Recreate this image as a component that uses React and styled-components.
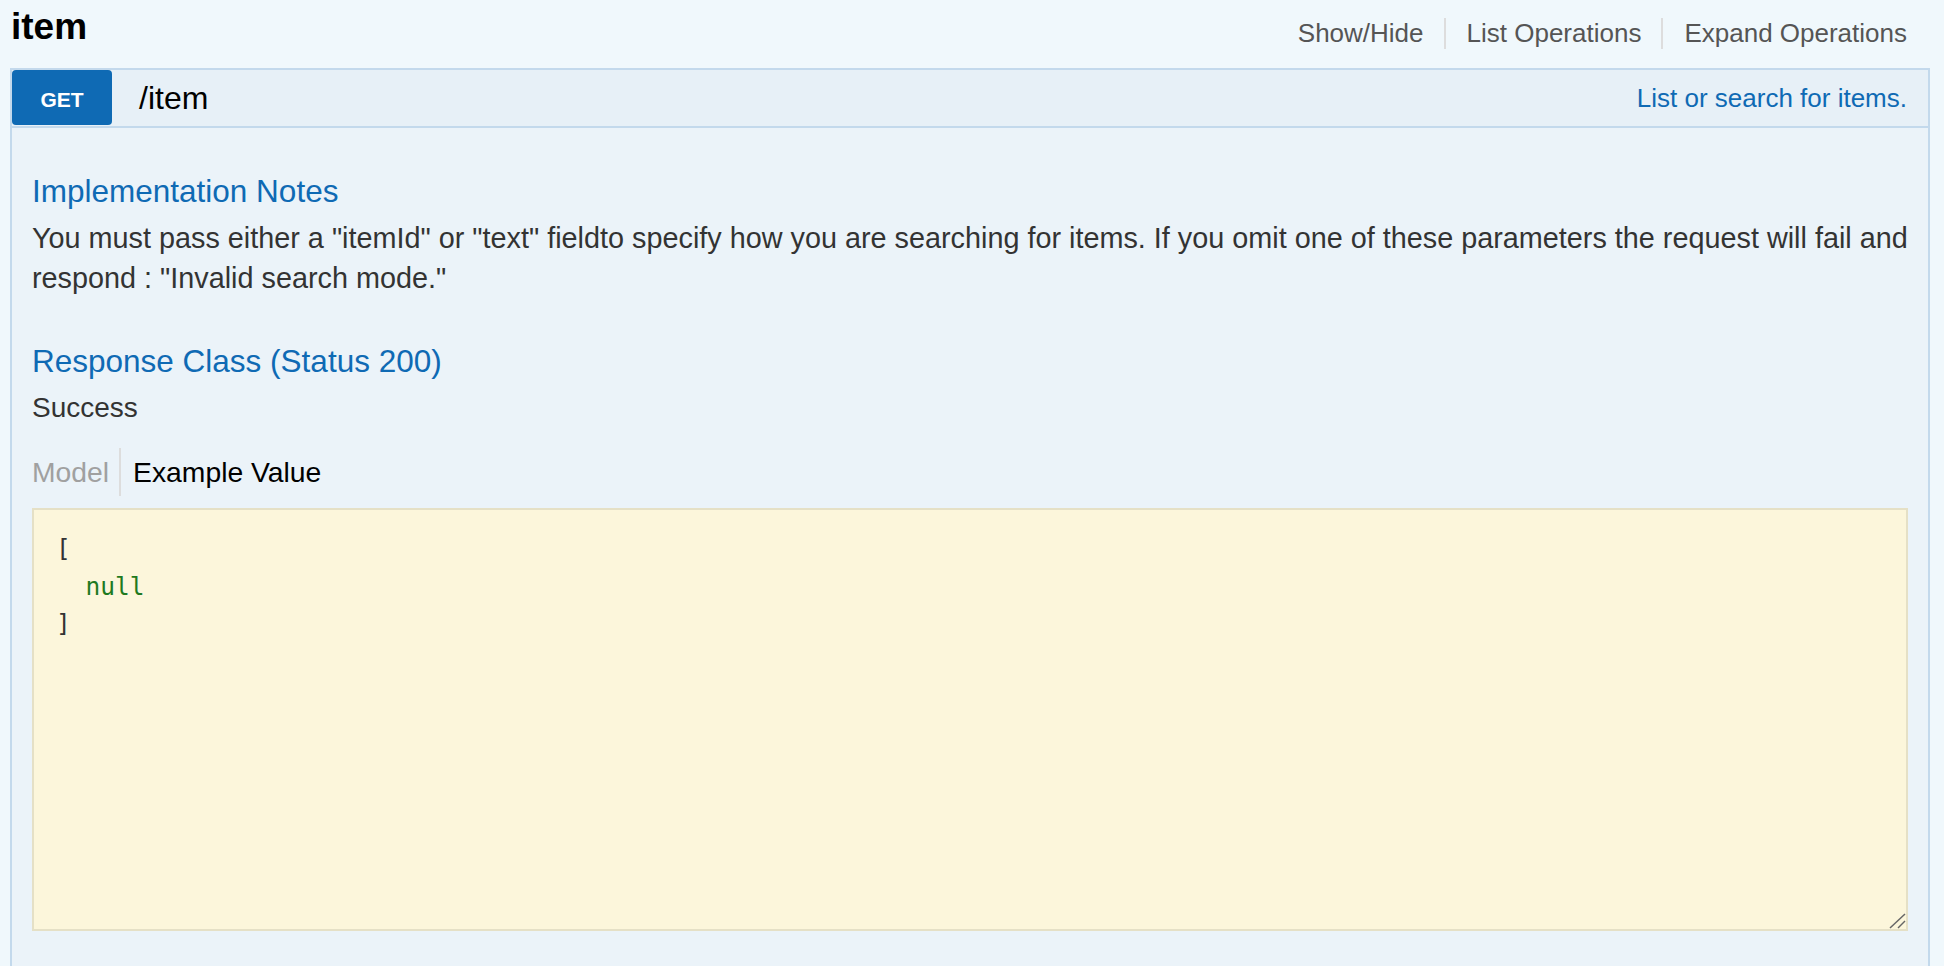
import React from 'react';
import styled, { createGlobalStyle } from 'styled-components';

const GlobalStyle = createGlobalStyle`
  html, body {
    margin: 0;
    padding: 0;
    height: 100%;
    overflow: hidden;
    background: #f0f8fc;
  }
  body {
    font-family: 'Liberation Sans', Arial, Helvetica, sans-serif;
    color: #333;
  }
`;

const Page = styled.div`
  padding: 0 14px 0 10px;
`;

const ResourceHeading = styled.div`
  display: flex;
  justify-content: space-between;
  align-items: flex-start;
  height: 68px;
`;

const Title = styled.h2`
  margin: 0;
  padding: 5px 0 0 1px;
  font-size: 37px;
  line-height: 44px;
  font-weight: bold;
  color: #000;
`;

const Options = styled.ul`
  list-style: none;
  display: flex;
  margin: 18px 3px 0 0;
  padding: 0;
`;

const Option = styled.li`
  padding: 0 20px 0 21px;
  font-size: 26px;
  line-height: 31px;
  color: #555;
  border-right: 2px solid #ddd;

  &:last-child {
    border-right: none;
  }
`;

const Operation = styled.div`
  border: 2px solid #c3d9ec;
`;

const OpHeading = styled.div`
  display: flex;
  align-items: center;
  height: 56px;
  padding-right: 21px;
  background: #e7f0f7;
  border-bottom: 2px solid #c3d9ec;
`;

const Method = styled.span`
  display: flex;
  align-items: center;
  justify-content: center;
  align-self: stretch;
  box-sizing: border-box;
  width: 100px;
  margin-bottom: 1px;
  padding-top: 4px;
  background: #0f6ab4;
  border-radius: 4px;
  color: #fff;
  font-size: 21px;
  font-weight: bold;
`;

const Path = styled.span`
  margin-left: 27px;
  font-size: 32px;
  color: #000;
`;

const Summary = styled.span`
  margin-left: auto;
  font-size: 26px;
  color: #0f6ab4;
`;

const OpContent = styled.div`
  padding: 45px 20px 40px;
  background: #ebf3f9;
`;

const SectionTitle = styled.h4`
  margin: 0 0 9px;
  font-size: 31.5px;
  line-height: 36px;
  font-weight: normal;
  color: #0f6ab4;
`;

const Text = styled.p`
  margin: 0 0 ${(p) => p.$gap || 0}px;
  font-size: ${(p) => p.$size || 28}px;
  line-height: 40px;
  color: #333;
`;

const Tabs = styled.ul`
  list-style: none;
  display: flex;
  margin: 20px 0 0;
  padding: 0;
`;

const Tab = styled.li`
  padding: 4px ${(p) => (p.$first ? '10px' : '0')} 4px ${(p) => (p.$first ? '0' : '12px')};
  font-size: 28.3px;
  line-height: 40px;
  color: ${(p) => (p.$active ? '#000' : '#a0a0a0')};
  border-right: ${(p) => (p.$first ? '2px solid #ddd' : 'none')};
`;

const Snippet = styled.pre`
  position: relative;
  box-sizing: border-box;
  height: 423px;
  margin: 12px 0 0;
  padding: 20px 22px;
  background: #fcf6db;
  border: 2px solid #e5e0c6;
  font-family: 'DejaVu Sans Mono', 'Liberation Mono', monospace;
  font-size: 24.5px;
  line-height: 37.5px;
  color: #333;
`;

const NullValue = styled.span`
  color: #1f7a1f;
`;

const Grip = styled.svg`
  position: absolute;
  right: 0;
  bottom: 0;
`;

const App = () => {
  return (
    <>
      <GlobalStyle />
      <Page>
        <ResourceHeading>
          <Title>item</Title>
          <Options>
            <Option>Show/Hide</Option>
            <Option>List Operations</Option>
            <Option>Expand Operations</Option>
          </Options>
        </ResourceHeading>
        <Operation>
          <OpHeading>
            <Method>GET</Method>
            <Path>/item</Path>
            <Summary>List or search for items.</Summary>
          </OpHeading>
          <OpContent>
            <SectionTitle>Implementation Notes</SectionTitle>
            <Text $gap={45} $size={28.8}>
              You must pass either a "itemId" or "text" fieldto specify how you are searching for items. If you omit one of these parameters the request will fail and respond : "Invalid search mode."
            </Text>
            <SectionTitle>Response Class (Status 200)</SectionTitle>
            <Text>Success</Text>
            <Tabs>
              <Tab $first>Model</Tab>
              <Tab $active>Example Value</Tab>
            </Tabs>
            <Snippet>
              {'[\n  '}
              <NullValue>null</NullValue>
              {'\n]'}
              <Grip width="17" height="17" viewBox="0 0 17 17">
                <line x1="1" y1="16" x2="16" y2="2" stroke="#666" strokeWidth="1.5" />
                <line x1="9" y1="16" x2="16" y2="9" stroke="#666" strokeWidth="1.5" />
              </Grip>
            </Snippet>
          </OpContent>
        </Operation>
      </Page>
    </>
  );
};

export default App;
